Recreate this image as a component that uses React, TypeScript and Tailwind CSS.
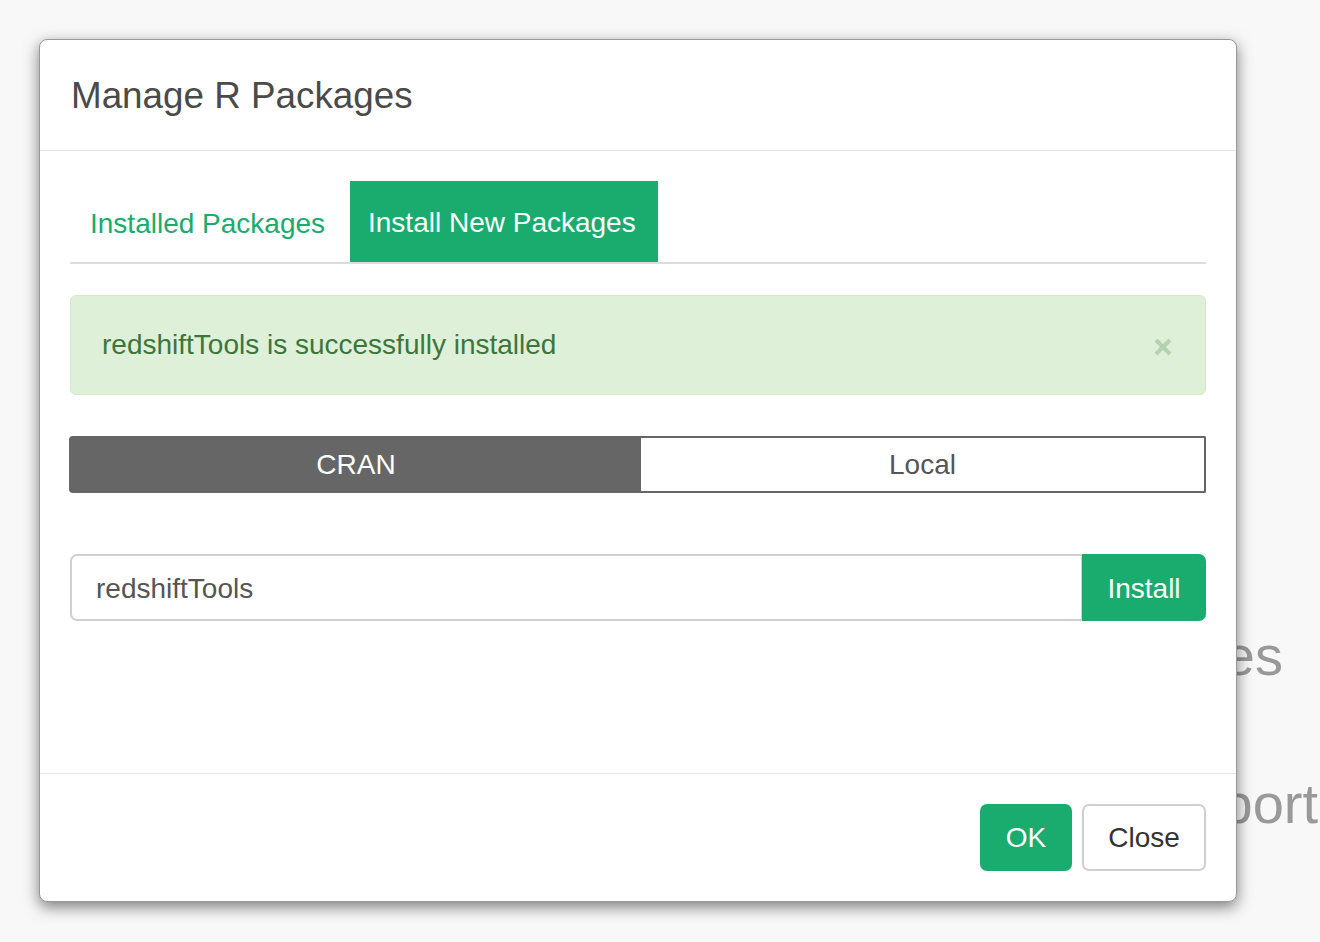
import React, { useState } from "react";
import clsx from "clsx";

// ─── Colours ──────────────────────────────────────────────────────────────────
// green #1aab6e, alert #dff0d8 / #d6e9c6 / #3c763d, toggle #666

const font = "font-['Liberation_Sans',Arial,Helvetica,sans-serif]";

// ─── Alert ────────────────────────────────────────────────────────────────────

function SuccessAlert({ message }: { message: string }) {
  return (
    <div className="flex h-[100px] items-center justify-between rounded-[6px] border border-[#d6e9c6] bg-[#dff0d8] pl-[31px] pr-[33px]">
      <span className="text-[28px] leading-none text-[#3c763d]">{message}</span>
      <button aria-label="Close" className="opacity-25">
        <svg width="18" height="18" viewBox="0 0 18 18" className="mt-[4px]">
          <path
            d="M2 2 L16 16 M16 2 L2 16"
            stroke="#3c763d"
            strokeWidth="4"
            strokeLinecap="butt"
          />
        </svg>
      </button>
    </div>
  );
}

// ─── Main component ───────────────────────────────────────────────────────────

export default function App() {
  const [tab, setTab] = useState<"installed" | "new">("new");
  const [source, setSource] = useState<"cran" | "local">("cran");
  const [pkg, setPkg] = useState("redshiftTools");

  return (
    <div
      className={clsx(
        font,
        "relative min-h-screen h-[942px] w-full overflow-hidden bg-[#f8f8f8]",
      )}
    >
      {/* ── Page behind the dialog ──────────────────────────────────────── */}
      <div className="flex flex-col items-end pt-[628px] text-[56px] leading-[56px] text-[#999]">
        <span className="mr-[37px]">Packages</span>
        <span className="mr-[2px] mt-[92px]">Import</span>
      </div>

      {/* ── Dialog ──────────────────────────────────────────────────────── */}
      <div className="absolute left-[39px] top-[39px] flex h-[863px] w-[1198px] flex-col rounded-[8px] border border-[#999] bg-white shadow-[0_5px_15px_rgba(0,0,0,0.5)]">
        <div className="flex h-[111px] shrink-0 items-center border-b border-[#e5e5e5] px-[31px] pt-[2px]">
          <h1 className="text-[36.8px] leading-none text-[#4a4a4a]">
            Manage R Packages
          </h1>
        </div>

        <div className="flex flex-1 flex-col px-[30px] pt-[30px]">
          {/* Tabs */}
          <div className="flex border-b-2 border-[#ddd]">
            <button
              onClick={() => setTab("installed")}
              className={clsx(
                "flex h-[81px] w-[280px] items-center pl-[20px] pt-[4px] text-[28px] leading-none",
                tab === "installed"
                  ? "bg-[#1aab6e] text-white"
                  : "text-[#1aab6e]",
              )}
            >
              Installed Packages
            </button>
            <button
              onClick={() => setTab("new")}
              className={clsx(
                "flex h-[81px] w-[308px] items-center pl-[18px] pt-[2px] text-[28px] leading-none",
                tab === "new" ? "bg-[#1aab6e] text-white" : "text-[#1aab6e]",
              )}
            >
              Install New Packages
            </button>
          </div>

          <div className="mt-[31px]">
            <SuccessAlert message="redshiftTools is successfully installed" />
          </div>

          {/* Source toggle */}
          <div className="-ml-px mt-[41px] flex h-[57px]">
            <button
              onClick={() => setSource("cran")}
              className={clsx(
                "flex w-[572px] items-center justify-center rounded-l-[4px] border-2 border-r-0 text-[28px] leading-none",
                source === "cran"
                  ? "border-[#666] bg-[#666] text-white"
                  : "border-[#666] bg-white text-[#555]",
              )}
            >
              CRAN
            </button>
            <button
              onClick={() => setSource("local")}
              className={clsx(
                "flex flex-1 items-center justify-center rounded-r-[2px] border-2 border-l-0 text-[28px] leading-none",
                source === "local"
                  ? "border-[#666] bg-[#666] text-white"
                  : "border-[#666] bg-white text-[#555]",
              )}
            >
              Local
            </button>
          </div>

          {/* Package name + install */}
          <div className="mt-[61px] flex h-[67px]">
            <input
              value={pkg}
              onChange={(e) => setPkg(e.target.value)}
              className="min-w-0 flex-1 rounded-l-[7px] border-2 border-r border-[#d0d0d0] bg-white pl-[24px] pt-[2px] text-[28px] text-[#555] outline-none"
            />
            <button className="w-[124px] rounded-r-[7px] bg-[#1aab6e] pt-[2px] text-[28px] leading-none text-white">
              Install
            </button>
          </div>
        </div>

        {/* Footer */}
        <div className="flex shrink-0 justify-end gap-[10px] border-t border-[#e5e5e5] px-[30px] py-[30px]">
          <button className="h-[67px] w-[92px] rounded-[7px] bg-[#1aab6e] text-[28px] leading-none text-white">
            OK
          </button>
          <button className="h-[67px] w-[124px] rounded-[7px] border-2 border-[#d0d0d0] bg-white text-[28px] leading-none text-[#333]">
            Close
          </button>
        </div>
      </div>
    </div>
  );
}
